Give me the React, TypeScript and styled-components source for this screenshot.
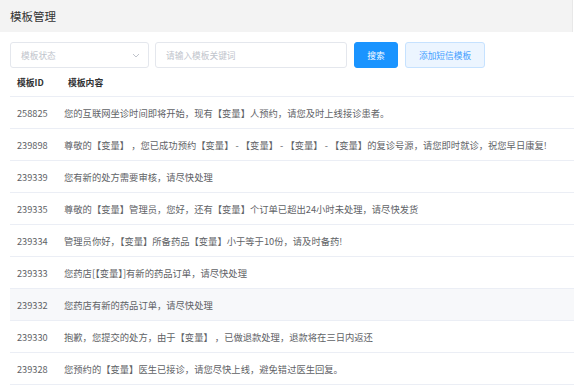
import React from "react";
import styled, { createGlobalStyle } from "styled-components";

const Global = createGlobalStyle`
  html, body { margin: 0; padding: 0; background: #fff; }
  body { font-family: "Noto Sans CJK SC", "Noto Sans", sans-serif; color: #606266; }
  * { box-sizing: border-box; }
`;

const Page = styled.div`
  width: 580px;
  height: 385px;
  overflow: hidden;
  display: flex;
  flex-direction: column;
`;

const Header = styled.div`
  height: 33px;
  width: 573px;
  background: #f3f3f3;
  border-right: 1px solid #e8e8e8;
  display: flex;
  align-items: center;
  padding-left: 10px;
  font-size: 11.5px;
  color: #333;
`;

const Body = styled.div`
  padding: 10px 6px 0 10px;
  display: flex;
  flex-direction: column;
`;

const Filters = styled.div`
  display: flex;
  align-items: center;
  height: 26px;
`;

const Select = styled.div`
  width: 139px;
  height: 26px;
  border: 1px solid #e4e7ed;
  border-radius: 3px;
  display: flex;
  align-items: center;
  justify-content: space-between;
  padding: 0 8px 0 10px;
  font-size: 8.7px;
  color: #c0c4cc;
`;

const Input = styled.div`
  width: 192px;
  height: 26px;
  margin-left: 6px;
  border: 1px solid #e4e7ed;
  border-radius: 3px;
  display: flex;
  align-items: center;
  padding-left: 10px;
  font-size: 8.7px;
  color: #c0c4cc;
`;

const Button = styled.div<{ $primary?: boolean; $w: number }>`
  width: ${(p) => p.$w}px;
  height: 26px;
  margin-left: 7px;
  border-radius: 3px;
  display: flex;
  align-items: center;
  justify-content: center;
  font-size: 8.7px;
  background: ${(p) => (p.$primary ? "#1a94ff" : "#ecf5ff")};
  color: ${(p) => (p.$primary ? "#fff" : "#409eff")};
  border: 1px solid ${(p) => (p.$primary ? "#1a94ff" : "#c6e2ff")};
`;

const Table = styled.div`
  margin-top: 1px;
  width: 564px;
  display: flex;
  flex-direction: column;
`;

const Row = styled.div<{ $head?: boolean; $hover?: boolean }>`
  display: grid;
  grid-template-columns: ${(p) => (p.$head ? "51px 1fr" : "47px 1fr")};
  align-items: center;
  height: ${(p) => (p.$head ? 28 : 32)}px;
  border-bottom: 1px solid #ebeef5;
  padding-left: 7px;
  background: ${(p) => (p.$hover ? "#f7f8fa" : "#fff")};
  font-size: ${(p) => (p.$head ? "8.8px" : "9.3px")};
  font-weight: ${(p) => (p.$head ? 600 : 400)};
  color: ${(p) => (p.$head ? "#303133" : "#606266")};
  white-space: nowrap;
`;

const Id = styled.span`
  font-size: 9.2px;
  color: #606266;
`;

const Content = styled.span`
  white-space: pre;
`;

const rows: [string, string][] = [
  ["258825", "您的互联网坐诊时间即将开始，现有【变量】人预约，请您及时上线接诊患者。"],
  ["239898", "尊敬的【变量】 ，您已成功预约【变量】 - 【变量】 - 【变量】 - 【变量】的复诊号源，请您即时就诊，祝您早日康复!"],
  ["239339", "您有新的处方需要审核，请尽快处理"],
  ["239335", "尊敬的【变量】管理员，您好，还有【变量】个订单已超出24小时未处理，请尽快发货"],
  ["239334", "管理员你好，【变量】所备药品【变量】小于等于10份，请及时备药!"],
  ["239333", "您药店[【变量】]有新的药品订单，请尽快处理"],
  ["239332", "您药店有新的药品订单，请尽快处理"],
  ["239330", "抱歉，您提交的处方，由于【变量】 ，已做退款处理，退款将在三日内返还"],
  ["239328", "您预约的【变量】医生已接诊，请您尽快上线，避免错过医生回复。"],
];

export default function App() {
  return (
    <Page>
      <Global />
      <Header>模板管理</Header>
      <Body>
        <Filters>
          <Select>
            <span>模板状态</span>
            <svg width="8" height="5" viewBox="0 0 8 5">
              <path d="M1 1l3 3 3-3" fill="none" stroke="#c0c4cc" strokeWidth="1" />
            </svg>
          </Select>
          <Input>请输入模板关键词</Input>
          <Button $primary $w={44}>搜索</Button>
          <Button $w={80}>添加短信模板</Button>
        </Filters>
        <Table>
          <Row $head>
            <span>模板ID</span>
            <span>模板内容</span>
          </Row>
          {rows.map(([id, text]) => (
            <Row key={id} $hover={id === "239332"}>
              <Id>{id}</Id>
              <Content>{text}</Content>
            </Row>
          ))}
        </Table>
      </Body>
    </Page>
  );
}
